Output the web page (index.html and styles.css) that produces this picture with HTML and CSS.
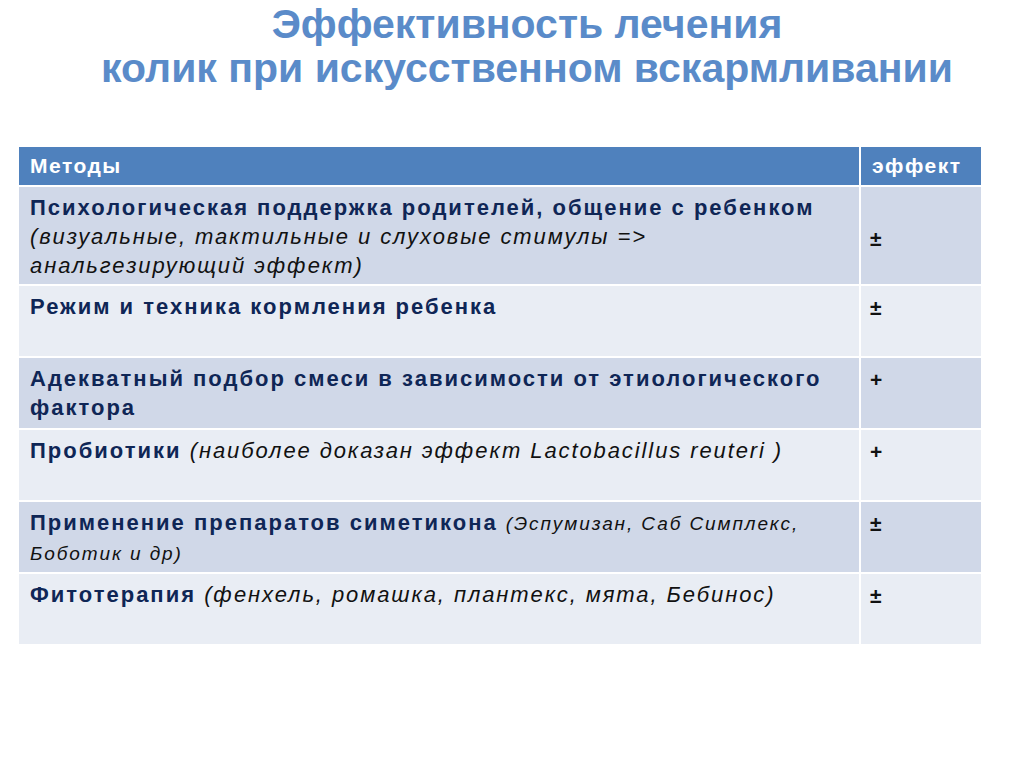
FILE: index.html
```html
<!DOCTYPE html>
<html lang="ru">
<head>
<meta charset="utf-8">
<link rel="stylesheet" href="styles.css">
</head>
<body>
<div class="slide">
  <h1 class="title">
    <span class="t-line">Эффективность лечения</span>
    <span class="t-line second">колик при искусственном вскармливании</span>
  </h1>
  <div class="table">
    <div class="cell head">Методы</div>
    <div class="cell head">эффект</div>

    <div class="cell dark"><b>Психологическая поддержка родителей, общение с ребенком</b><br><i>(визуальные, тактильные и слуховые стимулы =&gt;<br>анальгезирующий эффект)</i></div>
    <div class="cell dark eff mid">±</div>

    <div class="cell light"><b>Режим и техника кормления ребенка</b></div>
    <div class="cell light eff">±</div>

    <div class="cell dark"><b>Адекватный подбор смеси в зависимости от этиологического фактора</b></div>
    <div class="cell dark eff">+</div>

    <div class="cell light"><b>Пробиотики</b> <i>(наиболее доказан эффект Lactobacillus reuteri )</i></div>
    <div class="cell light eff">+</div>

    <div class="cell dark"><b>Применение препаратов симетикона</b> <i class="small">(Эспумизан, Саб Симплекс,<br>Боботик и др)</i></div>
    <div class="cell dark eff">±</div>

    <div class="cell light"><b>Фитотерапия</b> <i>(фенхель, ромашка, плантекс, мята, Бебинос)</i></div>
    <div class="cell light eff">±</div>
  </div>
</div>
</body>
</html>
```
FILE: styles.css
```css
html, body {
  margin: 0;
  padding: 0;
  background: #ffffff;
}
.slide {
  width: 1024px;
  height: 767px;
  overflow: hidden;
}
.title {
  margin: 0;
  padding: 5px 0 0 30px;
  display: flex;
  flex-direction: column;
  align-items: center;
  font-family: "Liberation Sans", Arial, sans-serif;
  font-weight: bold;
  font-size: 41px;
  line-height: 38px;
  color: #5a8bc9;
  height: 147px;
  box-sizing: border-box;
}
.t-line {
  display: block;
  white-space: nowrap;
}
.t-line.second {
  margin-top: 6px;
}
.table {
  margin-left: 19px;
  width: 962px;
  display: grid;
  grid-template-columns: 840px 120px;
  grid-template-rows: 38px 97px 70px 70px 70px 70px 70px;
  gap: 2px;
}
.cell {
  box-sizing: border-box;
  padding: 6px 8px 0 11px;
  color: #0f2656;
  font-family: "Liberation Sans", Arial, sans-serif;
  font-size: 22px;
  line-height: 29px;
  letter-spacing: 2px;
}
.cell i {
  color: #111111;
  letter-spacing: 1.9px;
}
.cell i.small {
  font-size: 19px;
  letter-spacing: 1.9px;
}
.head {
  background: #4f81bd;
  color: #ffffff;
  font-weight: bold;
  font-size: 21px;
  line-height: 24px;
  letter-spacing: 1.5px;
  padding-top: 7px;
}
.dark { background: #d0d8e8; }
.light { background: #e9edf4; }
.eff {
  font-weight: bold;
  color: #111111;
  font-size: 21px;
  padding-left: 9px;
  padding-top: 7px;
  letter-spacing: 0;
}
.mid {
  display: flex;
  align-items: center;
  padding-top: 6px;
}
```
